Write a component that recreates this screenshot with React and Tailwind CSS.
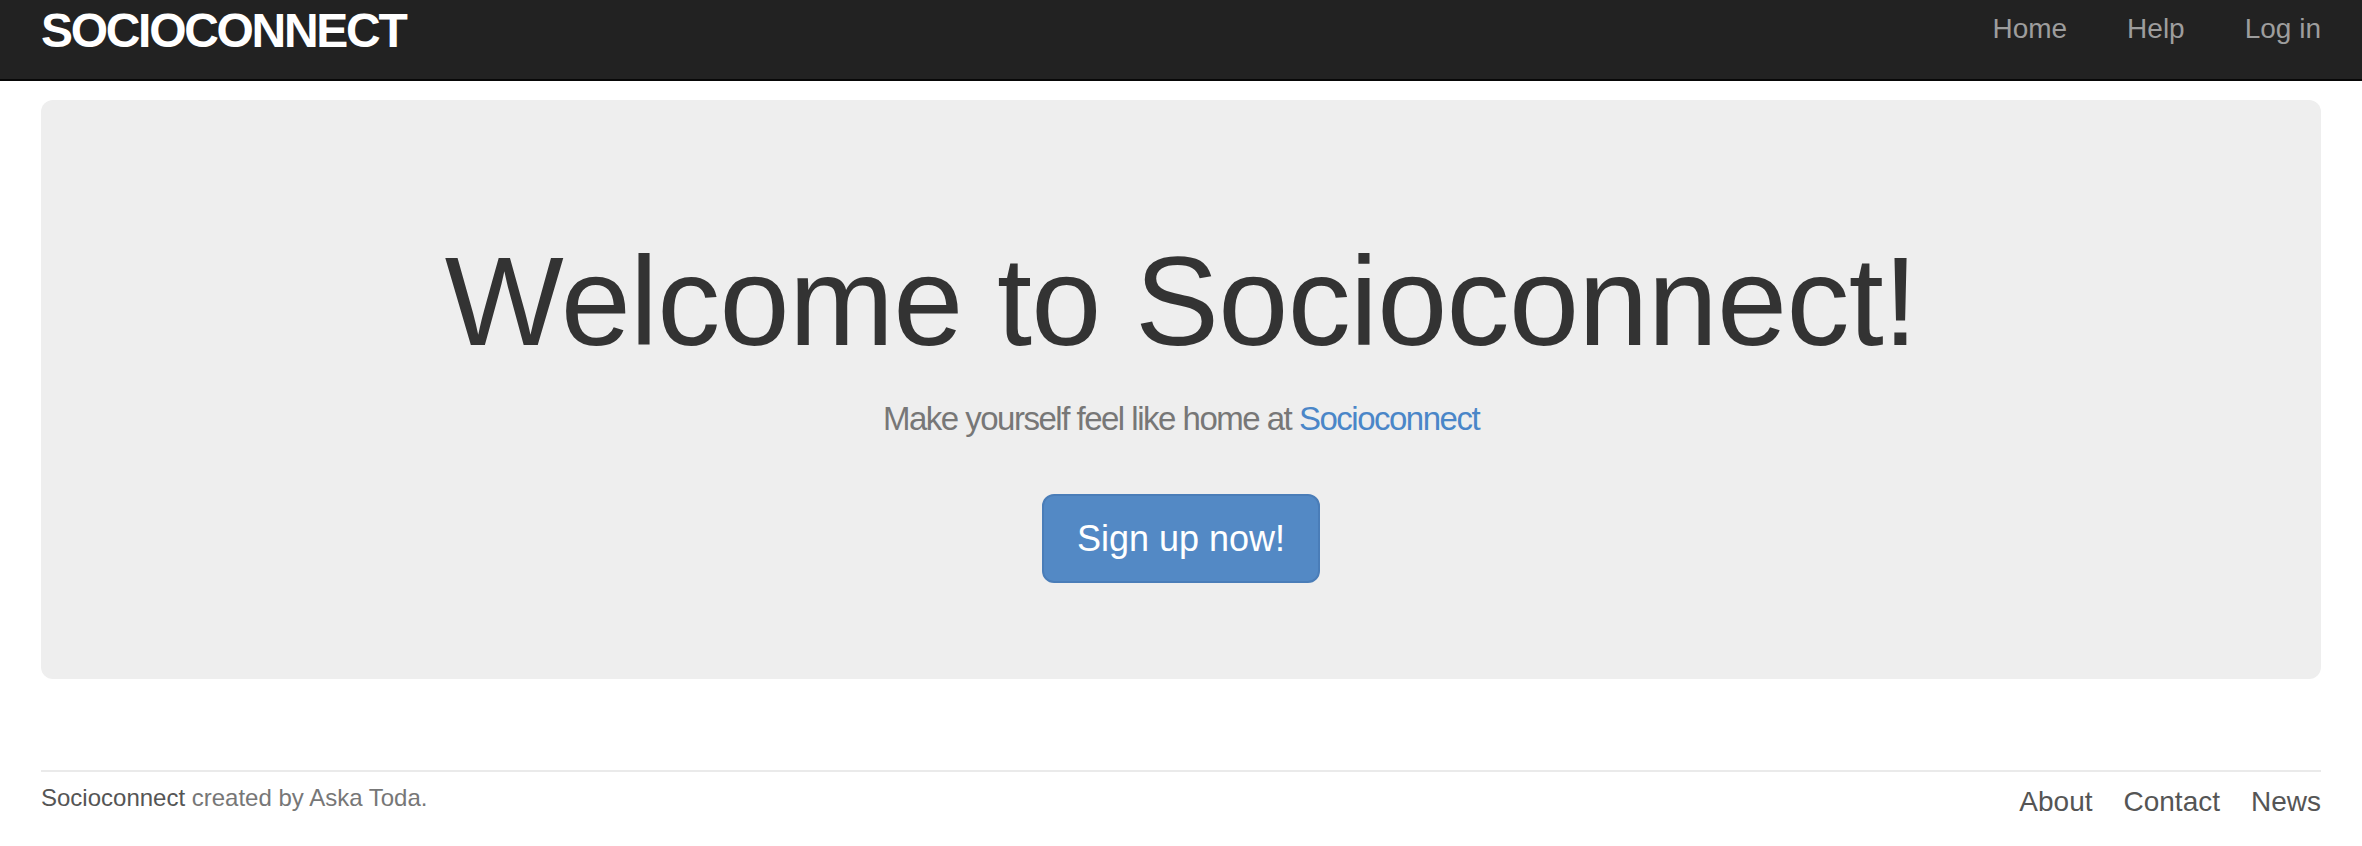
const navLinks = ['Home', 'Help', 'Log in']
const footerLinks = ['About', 'Contact', 'News']

function Header() {
  return (
    <header className="h-[81px] border-b-2 border-[#080808] bg-[#222222]">
      <div className="mx-auto flex h-full w-[2280px] items-start justify-between">
        <a href="#" className="pt-[3px] text-[48px] font-bold uppercase leading-[56px] tracking-[-2.3px] text-white">
          socioconnect
        </a>
        <nav className="flex gap-[60px] pt-[9px]">
          {navLinks.map((link) => (
            <a key={link} href="#" className="text-[28px] leading-[40px] text-[#9d9d9d]">
              {link}
            </a>
          ))}
        </nav>
      </div>
    </header>
  )
}

function Footer() {
  return (
    <footer className="mt-[91px] flex items-start justify-between border-t-2 border-[#eaeaea] pt-[10px]">
      <small className="text-[24px] leading-[31px] text-[#777777]">
        <a href="#" className="text-[#555555]">Socioconnect</a> created by Aska Toda.
      </small>
      <ul className="flex gap-[31px]">
        {footerLinks.map((link) => (
          <li key={link}>
            <a href="#" className="text-[28px] leading-[40px] text-[#555555]">
              {link}
            </a>
          </li>
        ))}
      </ul>
    </footer>
  )
}

export default function App() {
  return (
    <div className="min-h-screen bg-white font-['Liberation_Sans',Arial,sans-serif]">
      <Header />
      <div className="mx-auto w-[2280px] pt-[19px]">
        <section className="flex flex-col items-center rounded-[12px] bg-[#eeeeee] pb-[96px] pt-[133px] text-center">
          <h1 className="text-[126px] leading-[1.1] tracking-[-0.7px] text-[#333333]">
            Welcome to Socioconnect!
          </h1>
          <h2 className="mt-[29px] text-[33px] leading-[1.1] tracking-[-1.5px] text-[#777777]">
            Make yourself feel like home at{' '}
            <a href="#" className="text-[#4a86c8]">Socioconnect</a>
          </h2>
          <a
            href="#"
            className="mt-[57px] rounded-[12px] border-2 border-[#4a7db8] bg-[#5389c5] px-[33px] py-[19px] text-[36px] leading-[47px] text-white"
          >
            Sign up now!
          </a>
        </section>
        <Footer />
      </div>
    </div>
  )
}
